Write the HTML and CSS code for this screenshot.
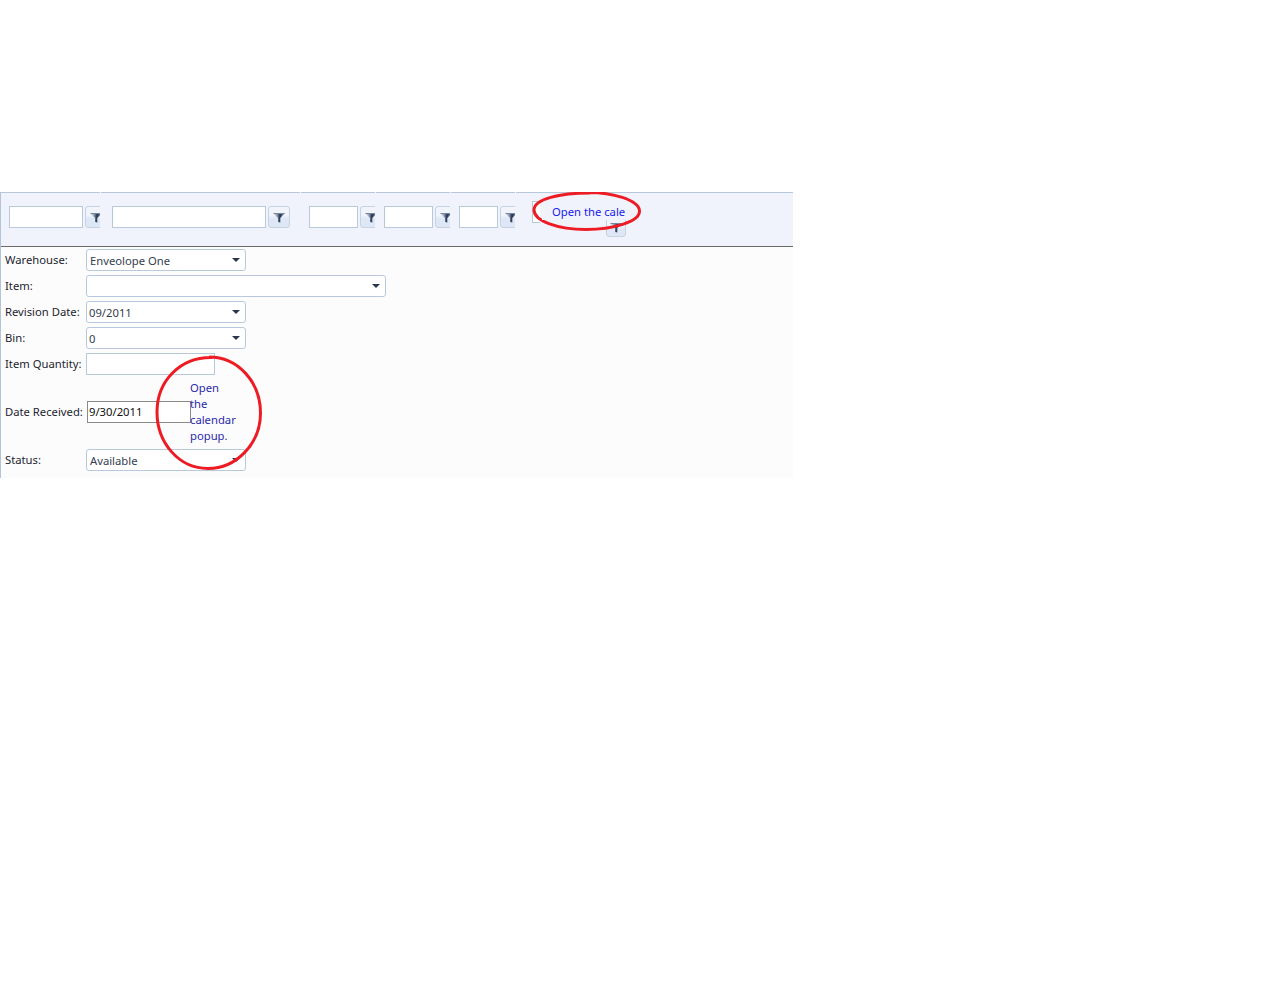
FILE: index.html
```html
<!DOCTYPE html>
<html lang="en">
<head>
  <meta charset="UTF-8" />
  <title>Inventory Receipt</title>
  <link rel="stylesheet" href="styles.css">
</head>
<body>
  <svg class="icon-defs" width="0" height="0">
    <defs>
      <linearGradient id="funnel" x1="0" y1="0" x2="1" y2="0">
        <stop offset="0" stop-color="#dfe6f0" />
        <stop offset="0.35" stop-color="#8d9db5" />
        <stop offset="0.58" stop-color="#22304a" />
        <stop offset="0.8" stop-color="#5d6e8a" />
        <stop offset="1" stop-color="#8393ab" />
      </linearGradient>
      <symbol id="filter" viewBox="0 0 12 11">
        <path d="M0 1h12L7.300 6v4.500L5 10V6z" fill="url(#funnel)" />
        <path d="M0.500 1h11v1h-11z" fill="#76879f" />
      </symbol>
    </defs>
  </svg>

  <div class="panel">
    <!-- Filter bar -->
    <div class="toolbar">
      <div class="cell cell-a">
        <input class="filter-input" type="text">
        <button class="filter-btn"><svg class="filter-icon"><use href="#filter" /></svg></button>
      </div>
      <div class="cell cell-b">
        <input class="filter-input" type="text">
        <button class="filter-btn"><svg class="filter-icon"><use href="#filter" /></svg></button>
      </div>
      <div class="cell cell-c">
        <input class="filter-input" type="text">
        <button class="filter-btn"><svg class="filter-icon"><use href="#filter" /></svg></button>
      </div>
      <div class="cell cell-c">
        <input class="filter-input" type="text">
        <button class="filter-btn"><svg class="filter-icon"><use href="#filter" /></svg></button>
      </div>
      <div class="cell cell-d">
        <input class="filter-input" type="text">
        <button class="filter-btn"><svg class="filter-icon"><use href="#filter" /></svg></button>
      </div>
      <div class="cell cell-e">
        <div class="date-stub"></div>
        <div class="cell-tip">Open the cale</div>
        <button class="filter-btn low-btn"><svg class="filter-icon"><use href="#filter" /></svg></button>
      </div>
    </div>

    <!-- Form -->
    <div class="form">
      <label class="field-label">Warehouse:</label>
      <div class="combo combo-md"><span>Enveolope One</span><i class="arrow"></i></div>

      <label class="field-label">Item:</label>
      <div class="combo combo-lg"><span></span><i class="arrow"></i></div>

      <label class="field-label">Revision Date:</label>
      <div class="combo combo-md tight"><span>09/2011</span><i class="arrow"></i></div>

      <label class="field-label">Bin:</label>
      <div class="combo combo-md tight"><span>0</span><i class="arrow"></i></div>

      <label class="field-label">Item Quantity:</label>
      <div class="text-box"></div>

      <label class="field-label">Date Received:</label>
      <div class="date-row">
        <div class="date-box">9/30/2011</div>
        <div class="tooltip">Open the calendar popup.</div>
      </div>

      <label class="field-label">Status:</label>
      <div class="combo combo-md"><span>Available</span><i class="arrow"></i></div>
    </div>

    <!-- Red marks drawn over the screenshot -->
    <svg class="marks" width="793" height="286" viewBox="0 192 793 286">
      <path class="mark" d="M586 192.500C612 192 639 200 639.500 211C640 222 612 229.500 586 229.500C558 229.500 534 221 534 210C534 199 560 193 590 193" />
      <path class="mark" d="M209 357C238 357 260.500 382 260.500 413C260.500 444 236 468.500 208 468.500C179 468.500 157 443 157 412C157 381 180 357 212 357.500" />
    </svg>
  </div>
</body>
</html>
```

FILE: styles.css
```css
* {
  box-sizing: border-box;
  margin: 0;
  padding: 0;
}
body {
  background: #fff;
  font-family: 'Noto Sans', sans-serif;
  font-size: 11.25px;
  color: #1c2430;
  padding-top: 192px;
}
.icon-defs {
  position: absolute;
}
.panel {
  position: relative;
  width: 793px;
  height: 286px;
  overflow: hidden;
  background: #fcfcfc;
  border-left: 1px solid #b4c3d8;
}
.toolbar {
  display: flex;
  height: 55px;
  background: #f0f3fb;
  border-bottom: 1px solid #6b6b6b;
}
.cell {
  position: relative;
  display: flex;
  align-items: flex-start;
  gap: 2px;
  height: 54px;
  padding: 13px 0 0 8px;
  margin-right: 1px;
  overflow: hidden;
  border-top: 1px solid #b8c8dc;
}
.cell-a { width: 99px; }
.cell-b { width: 199px; padding-left: 11px; }
.cell-c { width: 74px; }
.cell-d { width: 64px; }
.cell-e { flex: 1; margin-right: 0; padding-left: 16px; }
.filter-input {
  flex: none;
  width: 74px;
  height: 22px;
  background: #fff;
  border: 1px solid #b9c9dd;
}
.cell-b .filter-input { width: 154px; }
.cell-c .filter-input { width: 49px; }
.cell-d .filter-input { width: 39px; }
.filter-btn {
  flex: none;
  display: flex;
  align-items: center;
  justify-content: center;
  width: 22px;
  height: 22px;
  background: linear-gradient(#f1f4fb 0, #f1f4fb 40%, #dde7f6 60%, #dde7f6 100%);
  border: 1px solid #c8d2e0;
  border-radius: 3px;
}
.filter-icon {
  width: 12px;
  height: 11px;
}
.date-stub {
  flex: none;
  width: 8px;
  height: 22px;
  margin-top: -5px;
  background: #fff;
  border: 1px solid #b9c9dd;
  border-right: 0;
}
.cell-tip {
  position: absolute;
  z-index: 1;
  left: 26px;
  top: 11px;
  width: 84px;
  padding-left: 10px;
  overflow: hidden;
  background: #f0f3fb;
  color: #1a1aee;
  line-height: 16px;
  white-space: nowrap;
}
.low-btn {
  position: absolute;
  left: 90px;
  top: 25px;
  width: 20px;
  height: 19px;
}
.form {
  display: grid;
  grid-template-columns: 81px 1fr;
  row-gap: 4px;
  align-items: center;
  padding: 2px 0 0 4px;
}
.field-label {
  white-space: nowrap;
  line-height: 22px;
}
.combo {
  display: flex;
  align-items: center;
  justify-content: space-between;
  height: 22px;
  padding: 0 5px 0 3px;
  background: #fff;
  border: 1px solid #b9c9dd;
  border-radius: 3px;
  color: #35404e;
}
.combo.tight { padding-left: 2px; }
.combo-md { width: 160px; }
.combo-lg { width: 300px; }
.arrow {
  width: 0;
  height: 0;
  border-left: 4px solid transparent;
  border-right: 4px solid transparent;
  border-top: 4px solid #28374f;
}
.text-box {
  width: 129px;
  height: 22px;
  background: #fff;
  border: 1px solid #b9c9dd;
}
.date-row {
  display: flex;
  align-items: center;
  margin-left: 1px;
}
.date-box {
  flex: none;
  width: 104px;
  height: 22px;
  padding-left: 1px;
  line-height: 20px;
  color: #111;
  background: #fff;
  border: 1px solid #8a8a8a;
}
.tooltip {
  width: 47px;
  margin-left: -1px;
  padding: 1px 0;
  line-height: 16px;
  color: #2b2ba8;
}
.marks {
  position: absolute;
  left: -1px;
  top: 0;
  pointer-events: none;
}
.mark {
  fill: none;
  stroke: #ed1c24;
  stroke-width: 3;
}
```
